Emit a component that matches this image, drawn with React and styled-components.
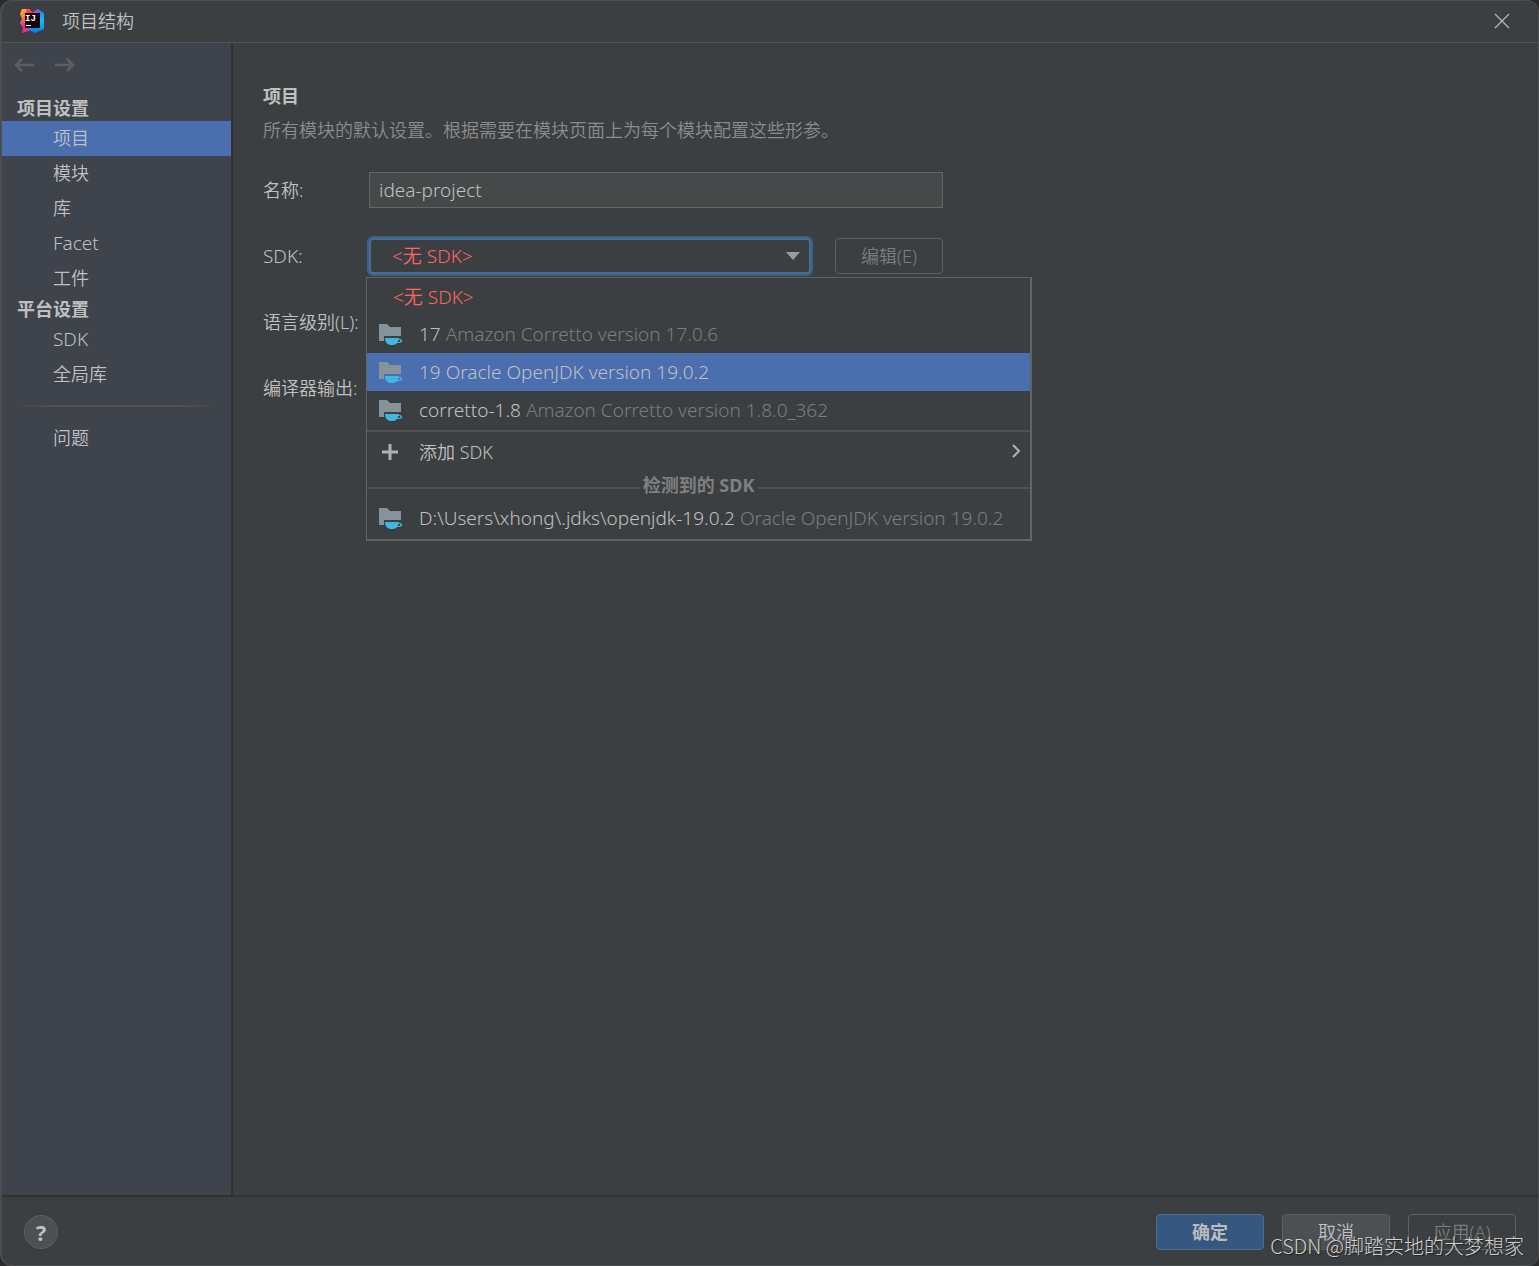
import {useState} from 'react';
//Styling
import styled, {createGlobalStyle} from 'styled-components';

const projectPages = ['项目', '模块', '库', 'Facet', '工件'];
const platformPages = ['SDK', '全局库'];

const sdks = [
  {name: '17', version: 'Amazon Corretto version 17.0.6'},
  {name: '19', version: 'Oracle OpenJDK version 19.0.2'},
  {name: 'corretto-1.8', version: 'Amazon Corretto version 1.8.0_362'},
];
const detectedSdks = [
  {name: 'D:\\Users\\xhong\\.jdks\\openjdk-19.0.2', version: 'Oracle OpenJDK version 19.0.2'},
];

//Latin titles are set one pixel larger than the Chinese ones
const isLatin = (text) => /^[\w\s]+$/.test(text);

//Icons
const IdeaLogo = () => (
  <svg width="26" height="26" viewBox="0 0 26 26" aria-hidden="true">
    <defs>
      <linearGradient id="warm" x1="0" y1="0" x2="0.4" y2="1">
        <stop offset="0" stopColor="#fdb92e" />
        <stop offset="0.35" stopColor="#f9863a" />
        <stop offset="0.7" stopColor="#e8308c" />
        <stop offset="1" stopColor="#f0307c" />
      </linearGradient>
      <linearGradient id="cool" x1="0" y1="0" x2="0" y2="1">
        <stop offset="0" stopColor="#2b7df0" />
        <stop offset="0.5" stopColor="#0cc0f5" />
        <stop offset="1" stopColor="#0a78ee" />
      </linearGradient>
    </defs>
    <path d="M3 1L10 1L15 6L13 22L3 25L4 20L1 15L3 11L1 6Z" fill="url(#warm)" />
    <path d="M8 1L14 4L15 8L6 8Z" fill="#fe2d6c" />
    <path d="M19 1L25 5L25 21L16 25L8 21L15 6Z" fill="url(#cool)" />
    <path d="M14 4L19 1L21 6L14 7Z" fill="#a848d8" />
    <rect x="6" y="5" width="15" height="15" fill="#120608" />
    <text x="6" y="13" fill="#fff" fontSize="9" fontWeight="700" fontFamily="Liberation Mono, monospace">IJ</text>
    <rect x="7" y="17" width="5" height="1" fill="#fff" />
  </svg>
);

const ArrowIcon = ({flip}) => (
  <svg width="20" height="16" viewBox="0 0 20 16" fill="none" stroke="#5d5e5f" strokeWidth="2.6" aria-hidden="true">
    <path d={flip ? 'M0 8H18M12 2L18 8L12 14' : 'M20 8H2M8 2L2 8L8 14'} />
  </svg>
);

const CloseIcon = () => (
  <svg width="16" height="16" viewBox="0 0 16 16" stroke="#b4b4b4" strokeWidth="1.3" aria-hidden="true">
    <path d="M1 1L15 15M15 1L1 15" />
  </svg>
);

const JdkIcon = () => (
  <svg width="24" height="24" viewBox="0 -2 24 24" aria-hidden="true">
    <path d="M0 0H8L11 3H22V12H5V17H0Z" fill="#87939a" />
    <path d="M6 14H20V15H21C24 15 24 19 20 19H18C17 20 16 21 14 21H11C8 20 6 18 6 14ZM19 16V18H20C22 18 22 16 20 16Z" fill="#40b6e0" fillRule="evenodd" />
  </svg>
);

const PlusIcon = () => (
  <svg width="24" height="16" viewBox="0 0 24 16" stroke="#afb1b3" strokeWidth="3" aria-hidden="true">
    <path d="M11 0V16M3 8H19" />
  </svg>
);

const ChevronIcon = () => (
  <svg width="10" height="16" viewBox="0 0 10 16" fill="none" stroke="#afb1b3" strokeWidth="2" aria-hidden="true">
    <path d="M1 1L7 7L1 13" />
  </svg>
);

const SdkOption = ({sdk, selected, onPick}) => (
  <StyledOption $selected={selected} $latin onClick={onPick}>
    <JdkIcon />
    <span>{sdk.name} <StyledVersion $selected={selected}>{sdk.version}</StyledVersion></span>
  </StyledOption>
);

const App = () => {
  const [page, setPage] = useState('项目');
  const [active, setActive] = useState('19');
  const [name, setName] = useState('idea-project');

  const renderPage = (title) => (
    <StyledPageLink key={title} href="#" $selected={page === title} $latin={isLatin(title)} onClick={() => setPage(title)}>
      {title}
    </StyledPageLink>
  );

  return (
    <>
      <GlobalStyle />
      <StyledWindow>
        <StyledTitleBar>
          <IdeaLogo />
          <h1>项目结构</h1>
          <StyledIconButton aria-label="关闭"><CloseIcon /></StyledIconButton>
        </StyledTitleBar>
        <StyledBody>
          <StyledSidebar>
            <StyledHistory>
              <StyledIconButton aria-label="后退"><ArrowIcon /></StyledIconButton>
              <StyledIconButton aria-label="前进"><ArrowIcon flip /></StyledIconButton>
            </StyledHistory>
            <StyledGroupTitle>项目设置</StyledGroupTitle>
            {projectPages.map(renderPage)}
            <StyledGroupTitle>平台设置</StyledGroupTitle>
            {platformPages.map(renderPage)}
            <StyledFade />
            {renderPage('问题')}
          </StyledSidebar>
          <StyledMain>
            <h2>项目</h2>
            <StyledHint>所有模块的默认设置。根据需要在模块页面上为每个模块配置这些形参。</StyledHint>
            <StyledForm>
              <StyledLabel as="label" htmlFor="name">名称:</StyledLabel>
              <StyledInput id="name" value={name} onChange={(e) => setName(e.target.value)} />
              <StyledLabel as="label" htmlFor="sdk" $latin>SDK:</StyledLabel>
              <StyledSdkRow>
                <StyledCombo>
                  <select id="sdk">
                    <option>&lt;无 SDK&gt;</option>
                  </select>
                  <svg width="14" height="8" viewBox="0 0 14 8" aria-hidden="true">
                    <path d="M0 0H14L7 8Z" fill="#9a9da0" />
                  </svg>
                </StyledCombo>
                <StyledButton $kind="disabled">编辑(E)</StyledButton>
                <StyledPopup>
                  <StyledNoSdk $latin onClick={() => setActive('')}>&lt;无 SDK&gt;</StyledNoSdk>
                  {sdks.map((sdk) => (
                    <SdkOption key={sdk.name} sdk={sdk} selected={active === sdk.name} onPick={() => setActive(sdk.name)} />
                  ))}
                  <StyledSeparator />
                  <StyledOption>
                    <PlusIcon />
                    <span>添加 SDK</span>
                    <ChevronIcon />
                  </StyledOption>
                  <StyledPopupTitle>检测到的 SDK</StyledPopupTitle>
                  {detectedSdks.map((sdk) => (
                    <SdkOption key={sdk.name} sdk={sdk} selected={active === sdk.name} onPick={() => setActive(sdk.name)} />
                  ))}
                </StyledPopup>
              </StyledSdkRow>
              <StyledLabel>语言级别(L):</StyledLabel>
              <StyledLabel>编译器输出:</StyledLabel>
            </StyledForm>
          </StyledMain>
        </StyledBody>
        <StyledFooter>
          <StyledHelp aria-label="帮助">?</StyledHelp>
          <StyledButton $kind="primary">确定</StyledButton>
          <StyledButton>取消</StyledButton>
          <StyledButton $kind="disabled">应用(A)</StyledButton>
        </StyledFooter>
        <StyledWatermark>CSDN @脚踏实地的大梦想家</StyledWatermark>
      </StyledWindow>
    </>
  );
};

const GlobalStyle = createGlobalStyle`
  *{
    box-sizing: border-box;
    margin: 0;
    padding: 0;
  }
  body{
    background: #2b2b2b;
    color: #c0c0c0;
    font-family: "Noto Sans", "Noto Sans CJK SC", sans-serif;
    font-size: 18px;
    font-weight: 350;
    line-height: 26px;
  }
  button, input, select{
    font: inherit;
    color: inherit;
  }
  button{
    background: none;
    border: none;
  }
  svg{
    display: block;
    flex: none;
  }
`
const StyledWindow = styled.div`
  position: relative;
  min-height: 100vh;
  display: flex;
  flex-direction: column;
  background: #3c3f41;
  border: 1px solid #4b4d4e;
  border-left-width: 2px;
  border-radius: 12px;
  overflow: hidden;
`
const StyledTitleBar = styled.header`
  display: flex;
  align-items: center;
  gap: 17px;
  height: 42px;
  padding: 0 28px 2px 17px;
  border-bottom: 1px solid #515354;
  h1{
    flex: 1;
    font-size: 18px;
    font-weight: 350;
  }
`
const StyledIconButton = styled.button`
  display: flex;
`
const StyledBody = styled.div`
  flex: 1;
  display: flex;
`
const StyledSidebar = styled.nav`
  width: 231px;
  flex: none;
  background: #3e434c;
  border-right: 2px solid #323232;
`
const StyledHistory = styled.div`
  display: flex;
  gap: 21px;
  height: 52px;
  padding: 14px 12px;
`
const StyledGroupTitle = styled.h3`
  padding-left: 15px;
  font-size: 18px;
  line-height: 26px;
`
const StyledPageLink = styled.a`
  display: block;
  padding-left: 51px;
  font-size: ${({$latin}) => ($latin ? '19px' : '18px')};
  line-height: 35px;
  color: inherit;
  text-decoration: none;
  background: ${({$selected}) => ($selected ? '#4b6eaf' : 'none')};
`
const StyledFade = styled.hr`
  height: 2px;
  margin: 13px 12px 14px;
  border: none;
  background: linear-gradient(90deg, transparent, #515151 20%, #515151 80%, transparent);
`
const StyledMain = styled.main`
  flex: 1;
  padding: 40px 30px;
  h2{
    font-size: 18px;
    line-height: 26px;
  }
`
const StyledHint = styled.p`
  margin: 8px 0 29px;
  color: #8c8c8c;
`
const StyledForm = styled.div`
  display: grid;
  grid-template-columns: 106px minmax(0, 574px);
  grid-auto-rows: 36px;
  row-gap: 30px;
  align-items: center;
`
const StyledLabel = styled.span`
  grid-column: 1;
  font-size: ${({$latin}) => ($latin ? '19px' : '18px')};
  white-space: nowrap;
`
const StyledInput = styled.input`
  width: 100%;
  height: 36px;
  padding: 0 9px;
  font-size: 19px;
  background: #45494a;
  border: 1px solid #646464;
  outline: none;
`
const StyledSdkRow = styled.div`
  position: relative;
  display: flex;
  gap: 24px;
`
const StyledCombo = styled.div`
  flex: 1;
  display: flex;
  align-items: center;
  padding-right: 9px;
  border: 2px solid #466d94;
  border-radius: 4px;
  box-shadow: 0 0 0 2px #3d6185;
  select{
    flex: 1;
    height: 32px;
    padding-left: 21px;
    font-size: 19px;
    appearance: none;
    background: none;
    border: none;
    outline: none;
    color: #ff6464;
  }
`
const buttonColors = {
  normal: {back: '#4c5052', edge: '#5e6060', text: '#c0c0c0'},
  primary: {back: '#365880', edge: '#4c708c', text: '#bbbbbb'},
  disabled: {back: 'transparent', edge: '#5e6060', text: '#7c7c7c'},
};
const StyledButton = styled.button`
  width: 108px;
  height: 36px;
  border: 1px solid ${({$kind = 'normal'}) => buttonColors[$kind].edge};
  border-radius: 4px;
  background: ${({$kind = 'normal'}) => buttonColors[$kind].back};
  color: ${({$kind = 'normal'}) => buttonColors[$kind].text};
  font-weight: ${({$kind}) => ($kind === 'primary' ? 700 : 350)};
`
const StyledPopup = styled.div`
  position: absolute;
  top: 39px;
  left: -3px;
  z-index: 2;
  width: 666px;
  padding-bottom: 2px;
  background: #3c3f41;
  border: 1px solid #616365;
  border-right-width: 2px;
  border-bottom-width: 2px;
`
const StyledOption = styled.button`
  display: flex;
  align-items: center;
  gap: 16px;
  width: 100%;
  height: 38px;
  padding: 0 8px 0 12px;
  font-size: ${({$latin}) => ($latin ? '19px' : '18px')};
  text-align: left;
  white-space: nowrap;
  background: ${({$selected}) => ($selected ? '#4b6eaf' : 'none')};
  span:first-of-type{
    flex: 1;
  }
`
const StyledNoSdk = styled(StyledOption)`
  height: 37px;
  padding-left: 26px;
  color: #ff6464;
`
const StyledVersion = styled.span`
  color: ${({$selected}) => ($selected ? 'inherit' : '#7c7c7c')};
`
const StyledSeparator = styled.hr`
  height: 2px;
  margin: 1px 0;
  border: none;
  background: #515151;
`
const StyledPopupTitle = styled.div`
  display: flex;
  align-items: center;
  gap: 4px;
  height: 28px;
  font-weight: 700;
  color: #808080;
  &::before, &::after{
    content: '';
    flex: 1;
    height: 2px;
    margin-top: 6px;
    background: #515151;
  }
`
const StyledFooter = styled.footer`
  display: flex;
  align-items: center;
  gap: 18px;
  height: 70px;
  padding: 2px 22px 0;
  border-top: 2px solid #323232;
`
const StyledHelp = styled.button`
  width: 34px;
  height: 34px;
  margin-right: auto;
  border: 1px solid #5e6060;
  border-radius: 50%;
  background: #4c5052;
  font-size: 22px;
  font-weight: 700;
`
const StyledWatermark = styled.div`
  position: absolute;
  right: 14px;
  bottom: 6px;
  color: #d0d0d0;
  font-family: "Noto Sans CJK SC", sans-serif;
  font-size: 20px;
  font-weight: 300;
  text-shadow: 1px 1px 1px #222222;
  pointer-events: none;
`
export default App;
